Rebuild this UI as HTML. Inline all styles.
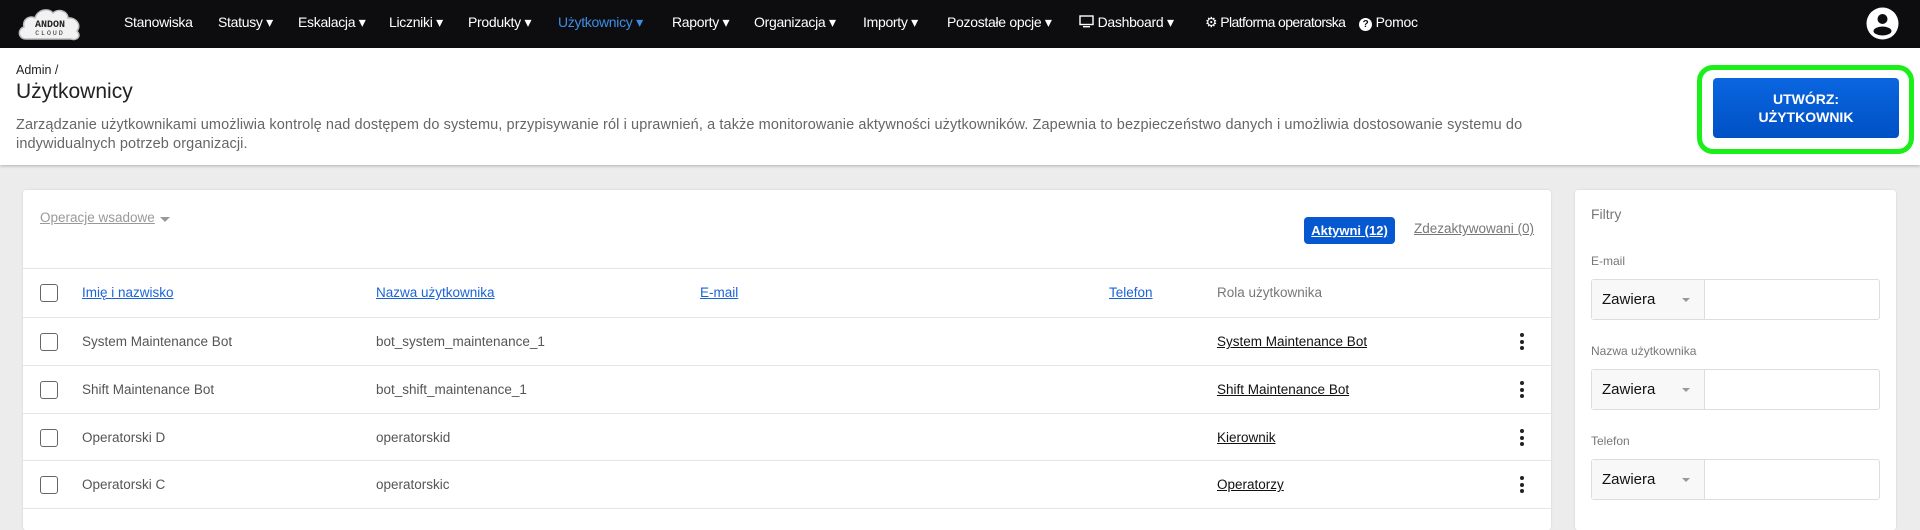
<!DOCTYPE html>
<html><head><meta charset="utf-8"><style>
*{box-sizing:border-box;margin:0;padding:0}
body{width:1920px;height:525px;overflow:hidden;background:#ececec;font-family:"Liberation Sans",sans-serif;color:#555;position:relative}
.nav{position:absolute;left:0;top:0;width:1920px;height:48px;background:#0d0d10}
.nav span{position:absolute;top:14px;font-size:14px;color:#fff;white-space:nowrap;letter-spacing:-0.3px}
.hdr{position:absolute;left:0;top:48px;width:1920px;height:117px;background:#fff;box-shadow:0 1px 3px rgba(0,0,0,.25)}
.abs{position:absolute;white-space:nowrap}
.card{position:absolute;background:#fff;border-radius:3px;box-shadow:0 0 2px rgba(0,0,0,.12)}
.hl{position:absolute;left:0;width:1528px;height:1px;background:#e6e6e6}
.cb{position:absolute;left:17px;width:18px;height:18px;border:1.3px solid #666;border-radius:3px}
.t{position:absolute;font-size:13.5px;color:#555;white-space:nowrap}
.lk{color:#1a64d6;text-decoration:underline}
.rl{color:#111;text-decoration:underline}
.dots{position:absolute;left:1497px;width:4px}
.dots i{display:block;width:4px;height:4px;border-radius:2px;background:#222;margin-bottom:2.5px}
.sel{position:absolute;left:16px;width:289px;height:41px;border:1px solid #ddd;border-radius:3px;background:#fff}
.sel .l{position:absolute;left:0;top:0;width:113px;height:39px;background:#f8f8f8;border-right:1px solid #ddd;font-size:15px;color:#111;padding:11px 10px}
.sel .a{position:absolute;left:90px;top:18px;border-left:4px solid transparent;border-right:4px solid transparent;border-top:4px solid #999}
.fl{position:absolute;left:16px;font-size:12px;color:#777}
</style></head><body>
<div class="nav">
 <svg style="position:absolute;left:16px;top:5px" width="68" height="38" viewBox="0 0 68 38"><path d="M10 34 C2 34 1 24 8 22 C6 14 14 10 19 13 C21 5 32 2 37 8 C42 3 52 6 52 13 C60 12 66 20 61 26 C66 32 60 36 55 34 Z" fill="#f2f2f2" stroke="#bbb" stroke-width="1.5"/><text x="34" y="22" font-family="Liberation Mono,monospace" font-weight="bold" font-size="10" text-anchor="middle" fill="#222">ANDON</text><text x="34" y="30" font-family="Liberation Mono,monospace" font-size="6.5" text-anchor="middle" fill="#222" letter-spacing="2">CLOUD</text></svg>
 <span style="left:124px">Stanowiska</span>
 <span style="left:218px">Statusy ▾</span>
 <span style="left:298px">Eskalacja ▾</span>
 <span style="left:389px">Liczniki ▾</span>
 <span style="left:468px">Produkty ▾</span>
 <span style="left:558px;color:#3d8ee8">Użytkownicy ▾</span>
 <span style="left:672px">Raporty ▾</span>
 <span style="left:754px">Organizacja ▾</span>
 <span style="left:863px">Importy ▾</span>
 <span style="left:947px">Pozostałe opcje ▾</span>
 <span style="left:1079px"><svg width="15" height="13" viewBox="0 0 15 13" style="vertical-align:-1px"><rect x="1" y="1" width="13" height="8.5" fill="none" stroke="#fff" stroke-width="1.4"/><rect x="4" y="11" width="7" height="1.4" fill="#fff"/></svg> Dashboard ▾</span>
 <span style="left:1205px;letter-spacing:-0.6px">⚙ Platforma operatorska</span>
 <span style="left:1359px"><b style="display:inline-block;width:13px;height:13px;border-radius:7px;background:#fff;color:#0d0d10;font-size:10px;text-align:center;line-height:13px">?</b> Pomoc</span>
 <svg style="position:absolute;left:1866px;top:7px" width="33" height="33" viewBox="0 0 33 33"><circle cx="16.5" cy="16.5" r="16" fill="#fff"/><circle cx="16.5" cy="12" r="5" fill="#0d0d10"/><ellipse cx="16.5" cy="24" rx="9" ry="4.5" fill="#0d0d10"/></svg>
</div>
<div class="hdr">
 <div class="abs" style="left:16px;top:15px;font-size:12.5px;color:#222">Admin /</div>
 <div class="abs" style="left:16px;top:32px;font-size:21px;color:#222">Użytkownicy</div>
 <div class="abs" style="left:16px;top:68px;font-size:14.5px;color:#666;line-height:19px;letter-spacing:0.1px">Zarządzanie użytkownikami umożliwia kontrolę nad dostępem do systemu, przypisywanie ról i uprawnień, a także monitorowanie aktywności użytkowników. Zapewnia to bezpieczeństwo danych i umożliwia dostosowanie systemu do<br>indywidualnych potrzeb organizacji.</div>
 <div class="abs" style="left:1697px;top:17px;width:217px;height:89px;border:5px solid #1aef1a;border-radius:16px"></div>
 <div class="abs" style="left:1713px;top:30px;width:186px;height:60px;background:linear-gradient(#0a66e0,#0050c4);border-radius:4px;color:#fff;font-size:14px;font-weight:bold;text-align:center;line-height:18px;padding-top:12px">UTWÓRZ:<br>UŻYTKOWNIK</div>
</div>
<div class="card" style="left:23px;top:190px;width:1528px;height:340px">
 <div class="t" style="left:17px;top:20px;color:#999;text-decoration:underline">Operacje wsadowe</div>
 <div class="abs" style="left:137px;top:27px;border-left:5px solid transparent;border-right:5px solid transparent;border-top:5px solid #999"></div>
 <div class="abs" style="left:1281px;top:27px;width:91px;height:27px;background:#0658d0;border-radius:4px;color:#fff;font-size:13px;font-weight:bold;text-align:center;line-height:27px;text-decoration:underline">Aktywni (12)</div>
 <div class="t" style="left:1391px;top:31px;color:#777;text-decoration:underline">Zdezaktywowani (0)</div>
 <div class="hl" style="top:78px"></div>
 <div class="cb" style="top:94px"></div>
 <div class="t lk" style="left:59px;top:95px">Imię i nazwisko</div>
 <div class="t lk" style="left:353px;top:95px">Nazwa użytkownika</div>
 <div class="t lk" style="left:677px;top:95px">E-mail</div>
 <div class="t lk" style="left:1086px;top:95px">Telefon</div>
 <div class="t" style="left:1194px;top:95px;color:#777">Rola użytkownika</div>
 <div class="hl" style="top:127px"></div>
 <div class="cb" style="top:143px"></div>
 <div class="t" style="left:59px;top:144px">System Maintenance Bot</div>
 <div class="t" style="left:353px;top:144px">bot_system_maintenance_1</div>
 <div class="t rl" style="left:1194px;top:144px">System Maintenance Bot</div>
 <div class="dots" style="top:143px"><i></i><i></i><i></i></div>
 <div class="hl" style="top:175px"></div>
 <div class="cb" style="top:191px"></div>
 <div class="t" style="left:59px;top:192px">Shift Maintenance Bot</div>
 <div class="t" style="left:353px;top:192px">bot_shift_maintenance_1</div>
 <div class="t rl" style="left:1194px;top:192px">Shift Maintenance Bot</div>
 <div class="dots" style="top:191px"><i></i><i></i><i></i></div>
 <div class="hl" style="top:223px"></div>
 <div class="cb" style="top:239px"></div>
 <div class="t" style="left:59px;top:240px">Operatorski D</div>
 <div class="t" style="left:353px;top:240px">operatorskid</div>
 <div class="t rl" style="left:1194px;top:240px">Kierownik</div>
 <div class="dots" style="top:239px"><i></i><i></i><i></i></div>
 <div class="hl" style="top:270px"></div>
 <div class="cb" style="top:286px"></div>
 <div class="t" style="left:59px;top:287px">Operatorski C</div>
 <div class="t" style="left:353px;top:287px">operatorskic</div>
 <div class="t rl" style="left:1194px;top:287px">Operatorzy</div>
 <div class="dots" style="top:286px"><i></i><i></i><i></i></div>
 <div class="hl" style="top:318px"></div>
</div>
<div class="card" style="left:1575px;top:190px;width:321px;height:340px">
 <div class="fl" style="top:16px;font-size:14px">Filtry</div>
 <div class="fl" style="top:64px">E-mail</div>
 <div class="sel" style="top:89px"><div class="l">Zawiera<div class="a"></div></div></div>
 <div class="fl" style="top:154px">Nazwa użytkownika</div>
 <div class="sel" style="top:179px"><div class="l">Zawiera<div class="a"></div></div></div>
 <div class="fl" style="top:244px">Telefon</div>
 <div class="sel" style="top:269px"><div class="l">Zawiera<div class="a"></div></div></div>
</div>
</body></html>
